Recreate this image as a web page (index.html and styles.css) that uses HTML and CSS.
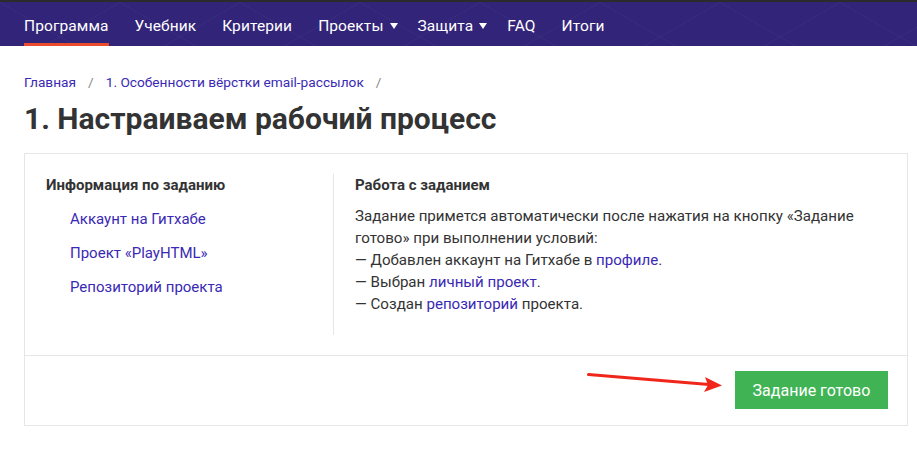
FILE: index.html
```html
<!DOCTYPE html>
<html lang="ru">
<head>
<meta charset="utf-8">
<link rel="stylesheet" href="styles.css">
</head>
<body>
<header class="topbar">
  <nav class="nav">
    <a class="nav-item active" href="#">Программа</a>
    <a class="nav-item" href="#">Учебник</a>
    <a class="nav-item" href="#">Критерии</a>
    <a class="nav-item" href="#">Проекты<span class="caret"></span></a>
    <a class="nav-item" href="#">Защита<span class="caret"></span></a>
    <a class="nav-item" href="#">FAQ</a>
    <a class="nav-item" href="#">Итоги</a>
  </nav>
</header>
<main class="page">
  <div class="crumbs">
    <a href="#">Главная</a><span class="sep">/</span><a href="#">1. Особенности вёрстки email-рассылок</a><span class="sep">/</span>
  </div>
  <h1 class="title">1. Настраиваем рабочий процесс</h1>
  <section class="panel">
    <div class="panel-body">
      <div class="info">
        <h3 class="col-title">Информация по заданию</h3>
        <ul class="info-links">
          <li><a href="#">Аккаунт на Гитхабе</a></li>
          <li><a href="#">Проект «PlayHTML»</a></li>
          <li><a href="#">Репозиторий проекта</a></li>
        </ul>
      </div>
      <div class="work">
        <h3 class="col-title">Работа с заданием</h3>
        <p class="work-text">Задание примется автоматически после нажатия на кнопку «Задание готово» при выполнении условий:<br>— Добавлен аккаунт на Гитхабе в <a href="#">профиле</a>.<br>— Выбран <a href="#">личный проект</a>.<br>— Создан <a href="#">репозиторий</a> проекта.</p>
      </div>
    </div>
    <div class="panel-foot">
      <button class="done-btn">Задание готово</button>
      <svg class="arrow" width="140" height="24" viewBox="0 0 140 24">
        <line x1="1.5" y1="1.5" x2="122" y2="11.5" stroke="#f0261b" stroke-width="3" stroke-linecap="round"/>
        <polygon points="135,12.5 118,4 121,12 117,19" fill="#f0261b"/>
      </svg>
    </div>
  </section>
</main>
</body>
</html>
```
FILE: styles.css
```css
* { box-sizing: border-box; }
body {
  margin: 0;
  font-family: "Roboto", "Noto Sans", sans-serif;
  color: #333;
  background: #fff;
}
a { text-decoration: none; color: #3a29b5; }
.topbar {
  height: 46px;
  border-top: 2px solid #2b2b2b;
  background-color: #322478;
  background-image:
    linear-gradient(30deg, transparent 49.6%, rgba(255,255,255,0.06) 50%, transparent 50.4%),
    linear-gradient(150deg, transparent 49.6%, rgba(255,255,255,0.06) 50%, transparent 50.4%);
  background-size: 120px 70px;
}
.nav {
  display: flex;
  height: 44px;
  padding-left: 24px;
  gap: 26px;
}
.nav-item {
  display: flex;
  align-items: center;
  color: #fff;
  font-size: 15.5px;
  letter-spacing: 0.1px;
  padding-top: 5px;
  line-height: 39px;
  height: 44px;
  position: relative;
  white-space: nowrap;
}
.nav-item.active::after {
  content: "";
  position: absolute;
  left: 0; right: 0; bottom: 0;
  height: 3px;
  background: #ea4b2f;
}
.caret {
  width: 0;
  height: 0;
  border-left: 4px solid transparent;
  border-right: 4px solid transparent;
  border-top: 6px solid #fff;
  margin-left: 6px;
  margin-right: -6px;
  margin-top: -1px;
}
.page { padding: 0 9px 0 24px; }
.crumbs {
  margin-top: 28px;
  font-size: 13.7px;
  line-height: 16px;
}
.crumbs .sep { color: #888; margin: 0 12px; }
.title {
  margin: 11px 0 16px;
  font-size: 30px;
  line-height: 36px;
  font-weight: 700;
  color: #333;
}
.panel {
  border: 1px solid #e6e6e6;
}
.panel-body {
  display: flex;
  padding: 20px 0 20px 21px;
}
.info {
  width: 288px;
  border-right: 1px solid #e6e6e6;
  flex: none;
}
.col-title {
  margin: 0;
  font-size: 15px;
  line-height: 22px;
  font-weight: 700;
  color: #333;
}
.info-links {
  list-style: none;
  margin: 0;
  padding: 0 0 0 24px;
}
.info-links li {
  margin-top: 12px;
  font-size: 15px;
  line-height: 22px;
}
.work { padding: 0 20px 20px 21px; }
.work-text {
  margin: 9px 0 0;
  font-size: 15.1px;
  line-height: 22px;
}
.panel-foot {
  position: relative;
  border-top: 1px solid #e6e6e6;
  display: flex;
  justify-content: flex-end;
  padding: 15px 19px 16px 0;
}
.done-btn {
  border: 0;
  background: #40b454;
  color: #fff;
  font-family: inherit;
  font-size: 16px;
  width: 153px;
  height: 38px;
}
.arrow {
  position: absolute;
  left: 562px;
  top: 17px;
}
```
